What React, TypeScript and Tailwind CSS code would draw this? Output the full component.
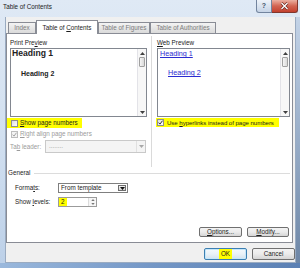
import type { ReactNode } from "react";

function Tri({ up, color = "#404040", w = 5, h = 3 }: { up?: boolean; color?: string; w?: number; h?: number }) {
  return (
    <svg width={w} height={h} viewBox="0 0 5 3">
      <path d={up ? "M0 3 L2.5 0 L5 3 Z" : "M0 0 L5 0 L2.5 3 Z"} fill={color} />
    </svg>
  );
}

function Check({ checked, disabled }: { checked?: boolean; disabled?: boolean }) {
  return (
    <span
      className={`flex h-[7px] w-[7px] shrink-0 items-center justify-center border ${
        disabled ? "border-[#bdbdbd] bg-[#f4f4f4]" : "border-[#8e8f8f] bg-gradient-to-br from-[#dedede] to-white"
      }`}
    >
      {checked && (
        <svg width="5" height="5" viewBox="0 0 5 5">
          <path d="M0.5 2.6 L2 4.1 L4.5 0.7" fill="none" stroke={disabled ? "#a3a3a3" : "#333"} strokeWidth="1" />
        </svg>
      )}
    </span>
  );
}

function ScrollBar() {
  return (
    <div className="flex w-[9px] shrink-0 flex-col border-l border-[#e3e3e8] bg-[#f7f7f7]">
      <div className="flex h-[8px] items-center justify-center">
        <Tri up />
      </div>
      <div className="mx-[1px] h-[10px] rounded-[1px] border border-[#a0a0a0] bg-gradient-to-r from-[#f5f5f5] to-[#d9d9d9]" />
      <div className="flex-1" />
      <div className="flex h-[8px] items-center justify-center">
        <Tri />
      </div>
    </div>
  );
}

function Tab({ children, active, w }: { children: ReactNode; active?: boolean; w: string }) {
  return (
    <div
      className={`flex items-center justify-center border border-b-0 border-[#898c95] ${w} ${
        active
          ? "relative z-10 -mb-px h-[14px] bg-white text-[#1b1b1b]"
          : "h-[11px] bg-gradient-to-b from-[#f3f3f3] to-[#dadada] text-[#7c7c7c]"
      }`}
    >
      {children}
    </div>
  );
}

function Btn({ children, w, primary }: { children: ReactNode; w: string; primary?: boolean }) {
  return (
    <div
      className={`flex h-full items-center justify-center rounded-[2px] border ${w} ${
        primary
          ? "border-[#3c7fb1] bg-gradient-to-b from-[#f4f9fc] via-[#e9f1f7] to-[#d2e2ee] shadow-[inset_0_0_0_1px_#c5e6fa]"
          : "border-[#707070] bg-gradient-to-b from-[#f3f3f3] via-[#ebebeb] to-[#d5d5d5]"
      }`}
    >
      {children}
    </div>
  );
}

export default function App() {
  return (
    <div className="relative flex h-[268px] w-[300px] flex-col overflow-hidden whitespace-nowrap bg-gradient-to-b from-[#dfe9f5] via-[#d2e0f0] to-[#bcd0e8] font-['Liberation_Sans',Arial,sans-serif] text-[6.3px] leading-[10px] text-[#1b1b1b]">
      {/* title bar */}
      <div className="flex h-[17px] shrink-0 items-start">
        <span className="pl-[3px] pt-[3px] text-[6.3px] leading-[8px]">Table of Contents</span>
        <div className="ml-auto mr-[2px] flex">
          <div className="flex h-[13px] w-[16px] items-center justify-center rounded-bl-[3px] border border-t-0 border-[#72849e] bg-gradient-to-b from-[#eef3f9] to-[#c6d4e6] text-[7px] font-bold text-[#45556b]">
            ?
          </div>
          <div className="flex h-[13px] w-[26px] items-center justify-center rounded-br-[3px] border border-l-0 border-t-0 border-[#80372e] bg-gradient-to-b from-[#eab0a2] via-[#d26452] to-[#c2402e]">
            <svg width="9" height="8" viewBox="0 0 9 8">
              <path d="M1.5 1 L7.5 7 M7.5 1 L1.5 7" stroke="#6a2a22" strokeWidth="2.6" />
              <path d="M1.5 1 L7.5 7 M7.5 1 L1.5 7" stroke="#fff" strokeWidth="1.3" />
            </svg>
          </div>
        </div>
      </div>

      <div className="flex flex-1">
        <div className="w-[5px]" />
        {/* dialog body */}
        <div className="flex w-[291px] flex-col border-x border-b border-[#9aabc1] bg-[#f0f0f0]">
          {/* tabs */}
          <div className="mt-[3px] flex h-[13px] items-end pl-[2px]">
            <Tab w="w-[28px]">Index</Tab>
            <Tab w="w-[62px]" active>
              <span>
                Table of <u>C</u>ontents
              </span>
            </Tab>
            <Tab w="w-[52px]">Table of Figures</Tab>
            <Tab w="w-[66px]">Table of Authorities</Tab>
          </div>

          {/* tab panel */}
          <div className="flex h-[210px] w-[287px] flex-col border border-[#898c95] bg-white">
            <div className="flex h-[133px]">
              {/* print preview column */}
              <div className="ml-[3px] flex w-[137px] flex-col pt-[4px]">
                <div className="h-[10px]">
                  Print Pre<u>v</u>iew
                </div>
                <div className="flex h-[69px] border border-[#828790] bg-white">
                  <div className="flex-1 pl-[1px]">
                    <div className="text-[8.6px] font-bold leading-[9px] text-[#222]">Heading 1</div>
                    <div className="ml-[9px] mt-[11px] text-[7px] font-bold leading-[9px] text-[#222]">Heading 2</div>
                  </div>
                  <ScrollBar />
                </div>
                <div className="-ml-[3px] mt-[1px] flex h-[10px] w-[75px] items-center gap-[2px] bg-[#ffff00] pl-[4px]">
                  <Check />
                  <span>
                    <u>S</u>how page numbers
                  </span>
                </div>
                <div className="mt-[1px] flex h-[10px] items-center gap-[2px] pl-[1px] text-[#9b9b9b]">
                  <Check checked disabled />
                  <span>
                    <u>R</u>ight align page numbers
                  </span>
                </div>
                <div className="mt-[1px] flex h-[13px] items-center text-[#9b9b9b]">
                  <span className="w-[35px]">
                    Ta<u>b</u> leader:
                  </span>
                  <div className="flex h-[13px] w-[101px] border border-[#c9c9c9] bg-[#f4f4f4]">
                    <span className="flex-1 pl-[3px] leading-[10px]">........</span>
                    <div className="flex w-[9px] items-center justify-center border-l border-[#e0e0e0]">
                      <Tri color="#a8a8a8" />
                    </div>
                  </div>
                </div>
              </div>

              <div className="ml-[4px] mt-[2px] w-px bg-[#dadada]" />

              {/* web preview column */}
              <div className="ml-[5px] flex w-[133px] flex-col pt-[4px]">
                <div className="h-[10px]">
                  <u>W</u>eb Preview
                </div>
                <div className="flex h-[69px] border border-[#828790] bg-white">
                  <div className="flex-1 pl-[2px] text-[7.2px] leading-[9px] text-[#2b2bd0]">
                    <div className="underline">Heading 1</div>
                    <div className="ml-[8px] mt-[10px] underline">Heading 2</div>
                  </div>
                  <ScrollBar />
                </div>
                <div className="-ml-[1px] mt-[1px] flex h-[9px] w-[123px] items-center gap-[3px] bg-[#ffff00] pl-[1px]">
                  <Check checked />
                  <span className="text-[6.1px] tracking-[-0.05px]">
                    Use <u>h</u>yperlinks instead of page numbers
                  </span>
                </div>
              </div>
            </div>

            {/* general */}
            <div className="flex h-[12px] items-center pl-[1px]">
              <span>General</span>
              <div className="ml-[4px] mr-[2px] h-px flex-1 bg-[#dcdcdc]" />
            </div>
            <div className="mt-[4px] flex h-[10px] items-center pl-[8px]">
              <span className="w-[43px]">
                Forma<u>t</u>s:
              </span>
              <div className="flex h-[10px] w-[70px] border border-[#7f7f7f] bg-white">
                <span className="flex-1 pl-[2px] leading-[8px]">From template</span>
                <div className="my-px mr-px flex w-[8px] items-center justify-center border border-[#6d6d6d] bg-gradient-to-b from-[#f2f2f2] to-[#d4d4d4]">
                  <Tri color="#111" />
                </div>
              </div>
            </div>
            <div className="mt-[4px] flex h-[10px] items-center pl-[8px]">
              <span className="w-[43px]">
                Show <u>l</u>evels:
              </span>
              <div className="flex h-[10px] w-[39px] border border-[#9b9b9b] bg-white">
                <span className="w-[8px] bg-[#ffff00] pl-[2px] leading-[8px]">2</span>
                <div className="flex-1" />
                <div className="flex w-[8px] flex-col border-l border-[#dcdcdc] bg-[#f6f6f6]">
                  <div className="flex flex-1 items-center justify-center">
                    <Tri up color="#777" w={4} h={2} />
                  </div>
                  <div className="flex flex-1 items-center justify-center">
                    <Tri color="#777" w={4} h={2} />
                  </div>
                </div>
              </div>
            </div>
            <div className="mt-[20px] flex h-[10px] justify-end gap-[5px] pr-[3px]">
              <Btn w="w-[43px]">
                <span>
                  <u>O</u>ptions...
                </span>
              </Btn>
              <Btn w="w-[42px]">
                <span>
                  <u>M</u>odify...
                </span>
              </Btn>
            </div>
          </div>

          {/* dialog buttons */}
          <div className="mt-[5px] flex h-[12px] justify-end gap-[5px]">
            <Btn w="w-[43px]" primary>
              <span className="bg-[#ffff00] px-[2px]">OK</span>
            </Btn>
            <Btn w="w-[43px]">Cancel</Btn>
          </div>
        </div>
        <div className="flex-1 bg-gradient-to-b from-[#c3d3e7] via-[#98adc8] to-[#6d86a6]" />
      </div>
      <div className="h-[5px] bg-gradient-to-r from-[#9ab8dc] via-[#7497c6] to-[#5b80b4]" />
    </div>
  );
}
